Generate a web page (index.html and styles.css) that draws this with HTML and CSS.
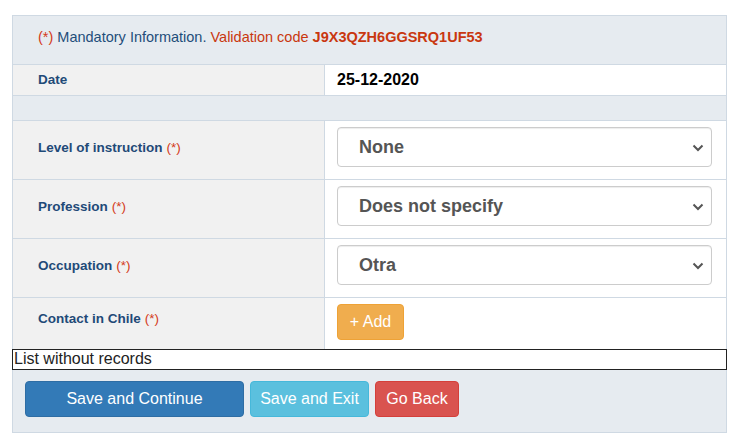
FILE: index.html
```html
<!DOCTYPE html>
<html>
<head>
<meta charset="utf-8">
<title>Registro</title>
<link rel="stylesheet" href="styles.css">
</head>
<body>
<div class="panel">
	<div class="note">
		<span class="req">(*)</span>&nbsp;Mandatory Information.&nbsp;<span class="code-label">Validation code <b>J9X3QZH6GGSRQ1UF53</b></span>
	</div>
	<div class="row row-date">
		<div class="label">Date</div>
		<div class="value date">25-12-2020</div>
	</div>
	<div class="spacer"></div>
	<div class="row row-field">
		<div class="label">Level of instruction <span class="req">(*)</span></div>
		<div class="value">
			<div class="select-wrap">
				<select class="form-select"><option>None</option></select>
				<svg class="chevron" width="12" height="8" viewBox="0 0 12 8"><path d="M1.5 1.5 L6 6 L10.5 1.5" fill="none" stroke="#555" stroke-width="2"/></svg>
			</div>
		</div>
	</div>
	<div class="row row-field">
		<div class="label">Profession <span class="req">(*)</span></div>
		<div class="value">
			<div class="select-wrap">
				<select class="form-select"><option>Does not specify</option></select>
				<svg class="chevron" width="12" height="8" viewBox="0 0 12 8"><path d="M1.5 1.5 L6 6 L10.5 1.5" fill="none" stroke="#555" stroke-width="2"/></svg>
			</div>
		</div>
	</div>
	<div class="row row-field">
		<div class="label">Occupation <span class="req">(*)</span></div>
		<div class="value">
			<div class="select-wrap">
				<select class="form-select"><option>Otra</option></select>
				<svg class="chevron" width="12" height="8" viewBox="0 0 12 8"><path d="M1.5 1.5 L6 6 L10.5 1.5" fill="none" stroke="#555" stroke-width="2"/></svg>
			</div>
		</div>
	</div>
	<div class="row row-contact">
		<div class="label">Contact in Chile <span class="req">(*)</span></div>
		<div class="value">
			<button class="btn btn-warning btn-add">+ Add</button>
		</div>
	</div>
	<div class="empty-list">List without records</div>
	<div class="actions">
		<button class="btn btn-primary btn-continue">Save and Continue</button>
		<button class="btn btn-info">Save and Exit</button>
		<button class="btn btn-danger">Go Back</button>
	</div>
</div>
</body>
</html>
```

FILE: styles.css
```css
* {
	box-sizing: border-box;
}

body {
	margin: 0;
	background: #fff;
	font-family: "Liberation Sans", Arial, sans-serif;
}

.panel {
	margin: 15px 0 0 12px;
	width: 715px;
	border: 1px solid #cfd9e3;
	background: #e6ebf0;
}

.note {
	height: 49px;
	padding: 0 0 7px 25px;
	display: flex;
	align-items: center;
	font-size: 14.5px;
	color: #1f4e7a;
	border-bottom: 1px solid #cfd9e3;
}

.req {
	color: #d43a1a;
}

.code-label {
	color: #c9370f;
}

.code-label b {
	font-weight: bold;
}

.row {
	display: flex;
	border-bottom: 1px solid #cfd9e3;
}

.label {
	width: 312px;
	padding-left: 25px;
	background: #f1f1f1;
	border-right: 1px solid #cfd9e3;
	font-size: 13.5px;
	font-weight: bold;
	color: #1f4a78;
	display: flex;
	align-items: center;
}

.label .req {
	font-weight: normal;
	margin-left: 4px;
}

.value {
	flex: 1;
	background: #fff;
	padding: 0 13px 0 12px;
}

.row-date {
	height: 31px;
}

.row-date .label {
	padding-bottom: 2px;
}

.date {
	font-size: 16px;
	font-weight: bold;
	color: #000;
	display: flex;
	align-items: center;
}

.spacer {
	height: 25px;
	border-bottom: 1px solid #cfd9e3;
}

.row-field {
	height: 59px;
}

.row-field .label {
	padding-bottom: 6px;
}

.row-field .value {
	padding-top: 6px;
}

.select-wrap {
	position: relative;
	width: 375px;
}

.form-select {
	appearance: none;
	-webkit-appearance: none;
	width: 100%;
	height: 40px;
	padding: 0 30px 0 21px;
	border: 1px solid #ccc;
	border-radius: 4px;
	background: #fff;
	font-family: inherit;
	font-size: 18px;
	font-weight: bold;
	color: #555;
	box-shadow: inset 0 1px 1px rgba(0, 0, 0, .075);
}

.chevron {
	position: absolute;
	right: 8px;
	top: 17px;
	pointer-events: none;
}

.row-contact {
	height: 51px;
	border-bottom: none;
}

.row-contact .label {
	padding-bottom: 10px;
}

.row-contact .value {
	padding-top: 6px;
}

.btn {
	height: 36px;
	padding: 0;
	border: 1px solid transparent;
	border-radius: 4px;
	font-family: inherit;
	font-size: 16px;
	color: #fff;
	white-space: nowrap;
	cursor: pointer;
}

.btn-warning {
	background: #f0ad4e;
	border-color: #eea236;
}

.btn-add {
	width: 67px;
}

.btn-primary {
	background: #337ab7;
	border-color: #2e6da4;
}

.btn-continue {
	width: 219px;
}

.btn-info {
	background: #5bc0de;
	border-color: #46b8da;
	width: 119px;
}

.btn-danger {
	background: #d9534f;
	border-color: #d43f3a;
	width: 84px;
}

.empty-list {
	margin: 0 -1px 0 -1px;
	height: 21px;
	border: 1px solid #222;
	background: #fff;
	font-size: 16px;
	line-height: 18px;
	color: #222;
	padding-left: 1px;
}

.actions {
	height: 62px;
	padding: 11px 12px 0;
	display: flex;
	gap: 6px;
}
```
